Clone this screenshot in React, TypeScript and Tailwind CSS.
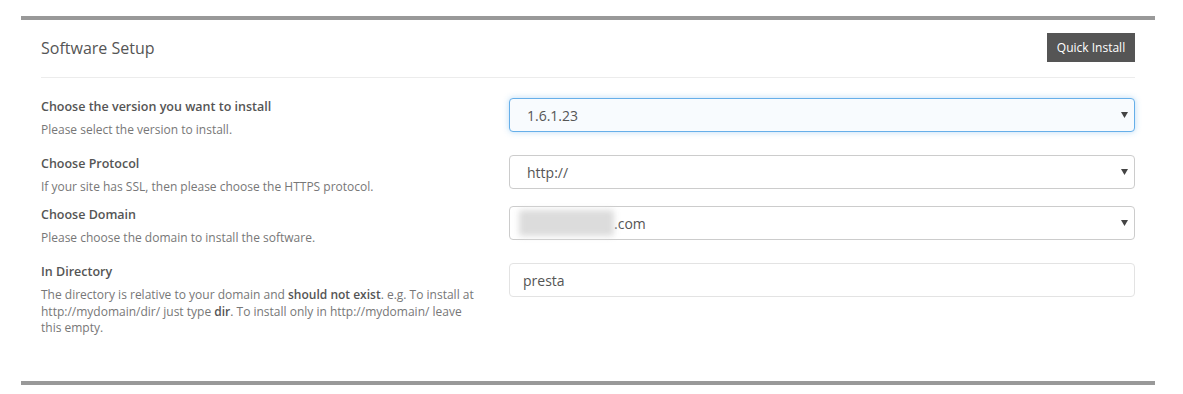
import React from "react";

const font = { fontFamily: '"Open Sans", "Noto Sans", sans-serif' };

function Caret() {
  return (
    <svg width="7" height="6" viewBox="0 0 7 6" className="shrink-0">
      <path d="M0 0 L7 0 L3.5 6 Z" fill="#444" />
    </svg>
  );
}

function Select({ children, focus }: { children: React.ReactNode; focus?: boolean }) {
  return (
    <div
      className={
        "flex h-[34px] w-[626px] items-center justify-between rounded-[4px] border pl-[17px] pr-[6px] text-[14px] text-[#555] " +
        (focus
          ? "border-[#66afe9] bg-[#f8fbfe] shadow-[0_0_6px_rgba(102,175,233,0.45)]"
          : "border-[#cccccc] bg-white")
      }
    >
      <div className="flex items-center">{children}</div>
      <Caret />
    </div>
  );
}

function Label({ title, children }: { title: string; children: React.ReactNode }) {
  return (
    <div className="w-[468px] shrink-0 pr-[33px]">
      <div className="text-[12.5px] font-semibold leading-[18px] text-[#555]">{title}</div>
      <div className="mt-[6px] text-[12px] leading-[16.5px] text-[#777]">{children}</div>
    </div>
  );
}

export default function App() {
  return (
    <div className="min-h-[394px] bg-white" style={font}>
      <div className="ml-[21px] w-[1134px] pt-[16px]">
        <div className="border-t-[4px] border-b-[4px] border-[#999999] px-[20px]">
          <div className="flex items-center justify-between pt-[13px] pb-[15px]">
            <div className="text-[16px] text-[#555]">Software Setup</div>
            <button className="h-[29px] w-[88px] bg-[#555555] text-[12px] text-white">Quick Install</button>
          </div>
          <div className="h-px bg-[#ececec]" />

          <div className="mt-[20px] flex h-[57px] items-start">
            <Label title="Choose the version you want to install">Please select the version to install.</Label>
            <Select focus>1.6.1.23</Select>
          </div>

          <div className="flex h-[51px] items-start">
            <Label title="Choose Protocol">If your site has SSL, then please choose the HTTPS protocol.</Label>
            <Select>http://</Select>
          </div>

          <div className="flex h-[57px] items-start">
            <Label title="Choose Domain">Please choose the domain to install the software.</Label>
            <Select>
              <span className="-ml-[8px] inline-block h-[26px] w-[95px] rounded-[2px] bg-[#dcdcdc] blur-[3px]" />
              <span>.com</span>
            </Select>
          </div>

          <div className="flex h-[118px] items-start">
            <Label title="In Directory">
              The directory is relative to your domain and <b className="font-semibold text-[#555]">should not exist</b>. e.g. To install at http://mydomain/dir/ just type <b className="font-semibold text-[#555]">dir</b>. To install only in http://mydomain/ leave this empty.
            </Label>
            <div className="flex h-[34px] w-[626px] items-center rounded-[4px] border border-[#e3e3e3] bg-white pl-[13px] text-[14px] text-[#555]">
              presta
            </div>
          </div>
        </div>
      </div>
    </div>
  );
}
